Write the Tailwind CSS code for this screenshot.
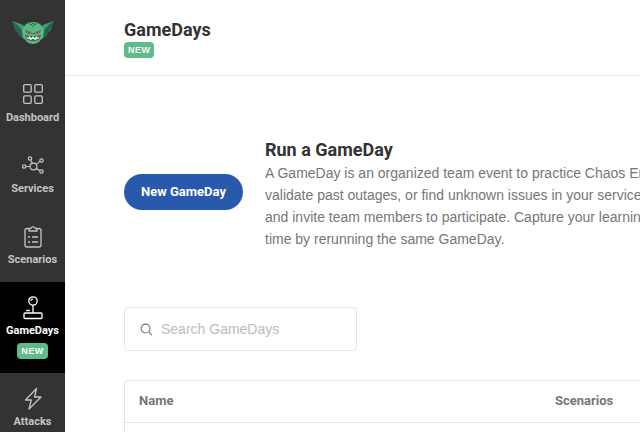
<!DOCTYPE html>
<html lang="en">
<head>
<meta charset="utf-8">
<title>GameDays</title>
<script src="https://cdn.jsdelivr.net/npm/@tailwindcss/browser@4"></script>
</head>
<body class="flex h-screen overflow-hidden bg-white font-['Roboto','Liberation_Sans',sans-serif] text-[#333333]">
<nav aria-label="Main" class="flex w-[65px] shrink-0 flex-col overflow-hidden bg-[#333333] text-[11px] leading-4 font-bold text-[#c4c4c4]">
  <a href="#" aria-label="Home" class="flex h-[69px] shrink-0 justify-center pt-[18px]">
    <svg class="h-7 w-11" viewBox="0 0 44 28">
      <path d="M1 3 12 7 16 11 15 21Q10 20 7 17L8 15Q3 14 3 9Z" fill="#2d6152"/>
      <path d="M43 3 32 7 28 11 29 21Q34 20 37 17L36 15Q41 14 41 9Z" fill="#2d6152"/>
      <path d="M1 3 12 7 14 12 12 14Q9 8 1 3M43 3 32 7 30 12 32 14Q35 8 43 3" fill="#439f73"/>
      <path d="M11 13Q13 4 22 4T33 13L32 20Q29 22 28 24Q22 28 16 24Q15 22 12 20Z" fill="#55b983"/>
      <path d="M18 5 20 7 22 5 24 7 26 5M21 8h2M20 15l2 1 2-1" fill="none" stroke="#286b51"/>
      <path d="m14 12 6 2-1 2q-4 0-5-4M30 12l-6 2 1 2q4 0 5-4" fill="#a0524b"/>
      <path d="M14 17q8 2 16 0l-2 5q-6 2-12 0Z" fill="#3c6249"/>
      <path d="M15.500 18 17 20 18.500 18 20.200 20 22 18 23.800 20 25.500 18 27 20 28.500 18 27.500 21.500 26 20.500 24.500 22.300 22 20.800 19.500 22.300 18 20.500 16.500 21.500Z" fill="#e3ecdd"/>
    </svg>
  </a>
  <a href="#" class="flex h-[71px] shrink-0 flex-col items-center pt-[14px]">
    <svg class="mb-[3px] size-6 shrink-0" viewBox="0 0 24 24" fill="none" stroke="currentColor" stroke-width="1.3"><rect x="2.700" y="1.700" width="7.500" height="7.500" rx="1.200"/><rect x="13.800" y="1.700" width="7.500" height="7.500" rx="1.200"/><rect x="2.700" y="12.800" width="7.500" height="7.500" rx="1.200"/><rect x="13.800" y="12.800" width="7.500" height="7.500" rx="1.200"/></svg>
    Dashboard
  </a>
  <a href="#" class="flex h-[71px] shrink-0 flex-col items-center pt-[14px]">
    <svg class="mb-[3px] size-6 shrink-0" viewBox="0 0 24 24" fill="none" stroke="currentColor" stroke-width="1.2"><circle cx="12.5" cy="12.5" r="3.4"/><circle cx="3.2" cy="12.5" r="1.7"/><circle cx="9" cy="4.5" r="1.7"/><circle cx="20.5" cy="6.5" r="1.7"/><circle cx="20.5" cy="17.5" r="1.7"/><path d="M5 12.5h4M9.8 6.2l1.4 3.1M19 7.4l-3.800 3M19 16.600l-3.800-2"/></svg>
    Services
  </a>
  <a href="#" class="flex h-[71px] shrink-0 flex-col items-center pt-[14px]">
    <svg class="mb-[3px] size-6 shrink-0" viewBox="0 0 24 24" fill="none" stroke="currentColor" stroke-width="1.3" stroke-linejoin="round"><path d="M7.500 3.500H6q-2 0-2 2V20q0 2 2 2h12q2 0 2-2V5.500q0-2-2-2h-1.500M8 6V3.500h1.700a2.400 2.400 0 0 1 4.600 0H16V6Z"/><path d="M7 12h2M11 12h6M7 17h2M11 17h6"/></svg>
    Scenarios
  </a>
  <a href="#" aria-current="page" class="flex h-[91px] shrink-0 flex-col items-center bg-black pt-[14px] text-white">
    <svg class="mb-[3px] size-6 shrink-0" viewBox="0 0 24 24" fill="none" stroke="currentColor" stroke-width="1.3"><circle cx="12" cy="5" r="4.200"/><path d="M12 9.200V17M9.900 4.800q.2-1.800 2-2M5.200 14.500h3.500"/><rect x="3" y="17" width="18" height="5.500" rx="1"/></svg>
    GameDays
    <span class="mt-1 rounded-[4px] bg-[#5dbc89] px-1 font-['Liberation_Sans',sans-serif] text-[9px] tracking-wider">NEW</span>
  </a>
  <a href="#" class="flex h-[71px] shrink-0 flex-col items-center pt-[14px]">
    <svg class="mb-[3px] size-6 shrink-0" viewBox="0 0 24 24" fill="none" stroke="currentColor" stroke-width="1.3" stroke-linejoin="round"><path d="M15.500 1.500 4.500 13h5.800L8 22 20 10h-6.500Z"/></svg>
    Attacks
  </a>
</nav>
<div class="min-w-0 flex-1 overflow-hidden">
  <header class="flex h-[76px] flex-col items-start border-b border-[#e9e9e9] pt-[18px] pl-[59px]">
    <h1 class="text-[18px] leading-6 font-bold">GameDays</h1>
    <span class="rounded-[4px] bg-[#5dbc89] px-1 font-['Liberation_Sans',sans-serif] text-[9px] leading-4 font-bold tracking-wider text-white">NEW</span>
  </header>
  <main class="pt-[62px] pl-[59px] text-[#767676]">
    <section class="flex items-center gap-[22px]">
      <button type="button" class="mt-[-4px] h-9 w-[119px] shrink-0 rounded-full bg-[#2859ad] text-[13px] font-bold whitespace-nowrap text-white">New GameDay</button>
      <div class="whitespace-nowrap">
        <h2 class="text-[18px] leading-6 font-bold text-[#333333]">Run a GameDay</h2>
        <p class="font-['Liberation_Sans',sans-serif] text-[14px] leading-[22px]">A GameDay is an organized team event to practice Chaos Engineering,<br>validate past outages, or find unknown issues in your services. Plan<br>and invite team members to participate. Capture your learnings over<br>time by rerunning the same GameDay.</p>
      </div>
    </section>
    <label class="mt-[57px] flex h-11 w-[233px] items-center gap-2 rounded-[4px] border border-[#e5e5e5] px-[15px]">
      <svg class="size-[13px] shrink-0" viewBox="0 0 14 14" fill="none" stroke="#777777" stroke-width="1.200" aria-hidden="true"><circle cx="6" cy="6" r="4.800"/><path d="m9.500 9.500 3.500 3.500"/></svg>
      <input type="search" aria-label="Search GameDays" placeholder="Search GameDays" class="w-full min-w-0 bg-transparent font-['Liberation_Sans',sans-serif] text-[14px] outline-none placeholder:text-[#bcbcbc]">
    </label>
    <div class="mt-[29px] w-[150%] rounded-[4px] border border-[#e5e5e5]">
      <table class="w-full table-fixed border-collapse text-left text-[13px] leading-5">
        <thead><tr class="h-[41px] border-b border-[#e5e5e5]"><th scope="col" class="w-[416px] pl-[14px] font-bold">Name</th><th scope="col" class="pl-[14px] font-bold">Scenarios</th></tr></thead>
        <tbody><tr class="h-12"><td></td><td></td></tr></tbody>
      </table>
    </div>
  </main>
</div>
</body>
</html>
